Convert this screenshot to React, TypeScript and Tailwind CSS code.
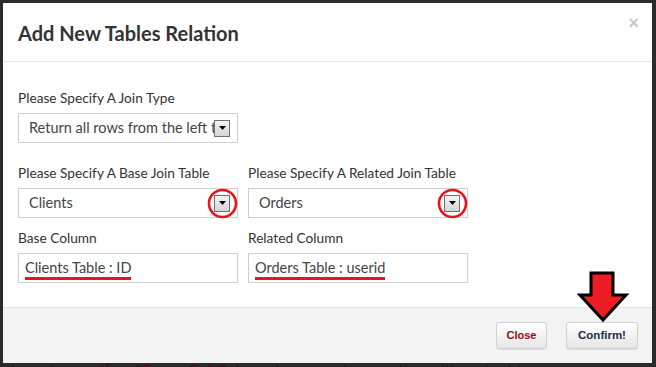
import React from "react";

const font = { fontFamily: "Lato, 'Liberation Sans', sans-serif" };

function SelectArrow() {
  return (
    <div className="w-[16px] h-[17px] border border-[#6f6f6f] bg-gradient-to-b from-[#f4f4f4] to-[#d6d6d6] flex items-center justify-center">
      <svg width="7" height="4" viewBox="0 0 7 4">
        <polygon points="0,0 7,0 3.5,4" fill="#000" />
      </svg>
    </div>
  );
}

function FakeSelect({ text, circled }: { text: string; circled?: boolean }) {
  return (
    <div className="relative w-[220px] h-[30px] border border-[#cfcfcf] bg-white flex items-center pl-[10px] pr-[5px]">
      <div className="flex-1 overflow-hidden whitespace-nowrap text-[14.5px] text-[#444]">{text}</div>
      <div className="relative mr-[2px]">
        <SelectArrow />
        {circled && (
          <svg className="absolute left-[-7px] top-[-7px]" width="31" height="31" viewBox="0 0 31 31">
            <circle cx="15.5" cy="15.5" r="13.5" fill="none" stroke="#e8141c" strokeWidth="2.6" />
          </svg>
        )}
      </div>
    </div>
  );
}

function FakeInput({ text }: { text: string }) {
  return (
    <div className="w-[220px] h-[30px] border border-[#cfcfcf] bg-white flex items-center pl-[6px]">
      <span className="relative text-[14.5px] text-[#444] leading-[18px]">
        {text}
        <span className="absolute left-0 right-0 bottom-[-3px] h-[3px] bg-[#e8141c]" />
      </span>
    </div>
  );
}

function Field({ label, children }: { label: string; children: React.ReactNode }) {
  return (
    <div className="flex flex-col w-[220px]">
      <div className="h-[20px] mb-[3px] text-[13.7px] leading-[16px] text-[#333] whitespace-nowrap">{label}</div>
      {children}
    </div>
  );
}

export default function App() {
  return (
    <div className="w-[656px] h-[367px] bg-[#2b2b2b] overflow-hidden pt-[3px] pl-[3px]" style={font}>
      <div className="relative w-[649px] h-[360px] bg-white flex flex-col">
        {/* header */}
        <div className="h-[59px] border-b border-[#e5e5e5] flex items-center px-[15px] relative">
          <h3 className="text-[20px] font-bold text-[#333] mt-[1px]">Add New Tables Relation</h3>
          <span className="absolute right-[13px] top-[11px] text-[18px] font-bold text-[#c8c8c8] leading-none" style={{ fontFamily: "'Liberation Sans', sans-serif" }}>×</span>
        </div>
        {/* body */}
        <div className="flex-1 px-[15px] pt-[28px]">
          <Field label="Please Specify A Join Type">
            <FakeSelect text="Return all rows from the left table" />
          </Field>
          <div className="flex gap-[10px] mt-[22px]">
            <Field label="Please Specify A Base Join Table">
              <FakeSelect text="Clients" circled />
            </Field>
            <Field label="Please Specify A Related Join Table">
              <FakeSelect text="Orders" circled />
            </Field>
          </div>
          <div className="flex gap-[10px] mt-[12px]">
            <Field label="Base Column">
              <FakeInput text="Clients Table : ID" />
            </Field>
            <Field label="Related Column">
              <FakeInput text="Orders Table : userid" />
            </Field>
          </div>
        </div>
        {/* footer */}
        <div className="h-[56px] border-t border-[#e1e1e1] bg-[#f3f3f3] flex items-center justify-end pr-[14px] gap-[19px]">
          <button className="h-[27px] w-[51px] rounded-[3px] border border-[#d0d0d0] bg-gradient-to-b from-[#ffffff] to-[#e6e6e6] shadow-[0_1px_1px_rgba(0,0,0,0.08)] text-[11px] font-bold text-[#8b1111]" style={{ fontFamily: "'Liberation Sans', sans-serif" }}>
            Close
          </button>
          <button className="h-[27px] w-[72px] rounded-[3px] border border-[#d0d0d0] bg-gradient-to-b from-[#ffffff] to-[#e6e6e6] shadow-[0_1px_1px_rgba(0,0,0,0.08)] text-[11.5px] font-bold text-[#1d2f47]" style={{ fontFamily: "'Liberation Sans', sans-serif" }}>
            Confirm!
          </button>
        </div>
        {/* red arrow annotation */}
        <svg className="absolute left-[574px] top-[267px]" width="54" height="56" viewBox="0 0 54 56">
          <polygon points="13,3 35,3 35,25 48,25 25,50 2,25 13,25" fill="#ee1c24" stroke="#000" strokeWidth="3" strokeLinejoin="miter" transform="translate(1,0)" />
        </svg>
      </div>
      <div className="h-[4px] overflow-hidden pl-[8px]">
        <div className="text-[14px] leading-[14px] text-[#3f0b0b] whitespace-nowrap" style={{ fontFamily: "Verdana, 'DejaVu Sans', sans-serif" }}>
          have to specify a "Group By" Column to generate a section with a chart type
        </div>
      </div>
    </div>
  );
}
